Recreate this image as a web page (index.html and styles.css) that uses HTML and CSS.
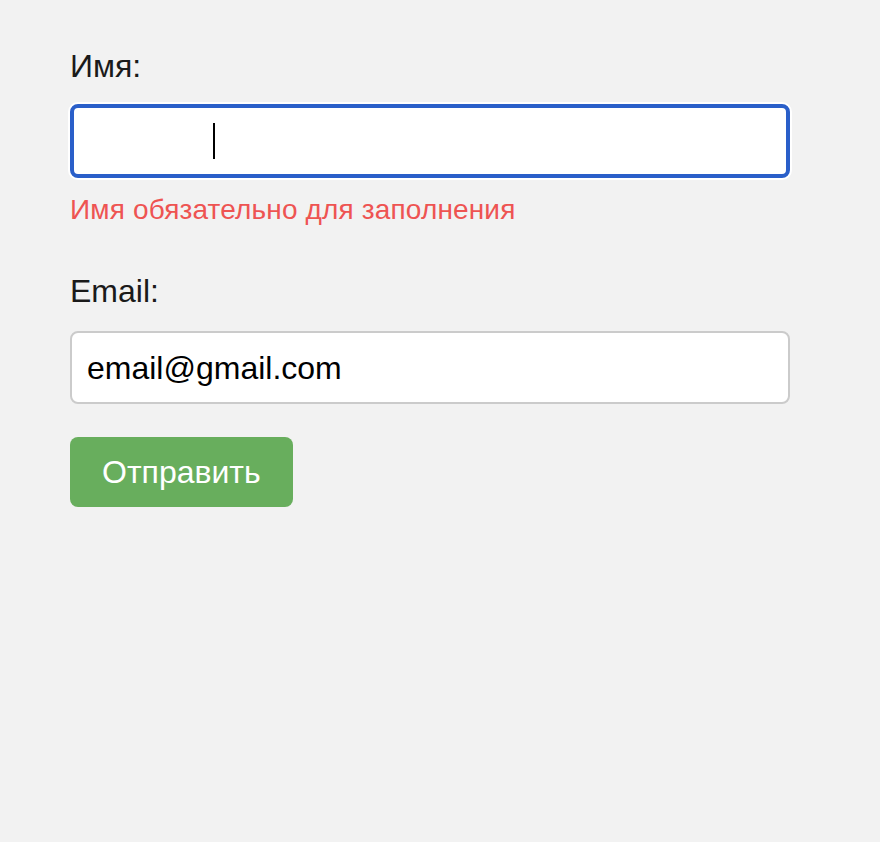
FILE: index.html
```html
<!DOCTYPE html>
<html lang="ru">
<head>
<meta charset="utf-8">
<title>Форма</title>
<link rel="stylesheet" href="styles.css">
</head>
<body>
<form class="form">
  <label class="label">Имя:</label>
  <div class="field field-focus"><span class="caret"></span></div>
  <div class="error">Имя обязательно для заполнения</div>
  <label class="label label-email">Email:</label>
  <div class="field field-email">email@gmail.com</div>
  <div class="actions"><button type="button" class="btn">Отправить</button></div>
</form>
</body>
</html>
```
FILE: styles.css
```css
html, body {
  margin: 0;
  padding: 0;
  background: #f2f2f2;
}
body {
  font-family: "Liberation Sans", Arial, Helvetica, sans-serif;
  color: #1a1a1a;
}
.form {
  display: flex;
  flex-direction: column;
  align-items: flex-start;
  padding: 48px 0 0 70px;
  width: 720px;
}
.label {
  font-size: 32px;
  line-height: 36px;
  height: 36px;
  color: #1a1a1a;
}
.field {
  box-sizing: border-box;
  width: 720px;
  height: 74px;
  margin-top: 20px;
  background: #fff;
  border: 2px solid #cbcbcb;
  border-radius: 8px;
  display: flex;
  align-items: center;
  padding: 0 15px;
  font-size: 32px;
  color: #000;
}
.field-email {
  margin-top: 22px;
  height: 73px;
  padding-top: 2px;
}
.field-focus {
  border: 4px solid #2a5fc9;
  box-shadow: 0 0 0 2px #fff;
  padding-left: 139px;
}
.caret {
  display: block;
  width: 2px;
  height: 36px;
  background: #000;
}
.error {
  margin-top: 16px;
  font-size: 28px;
  line-height: 32px;
  color: #ee5452;
  letter-spacing: 0.15px;
}
.label-email {
  margin-top: 47px;
}
.actions {
  margin-top: 33px;
}
.btn {
  box-sizing: border-box;
  height: 70px;
  padding: 0 32px;
  border: none;
  border-radius: 8px;
  background: #68ae5d;
  color: #fff;
  font-family: "Liberation Sans", Arial, Helvetica, sans-serif;
  font-size: 32px;
  line-height: 36px;
  cursor: pointer;
}
```
